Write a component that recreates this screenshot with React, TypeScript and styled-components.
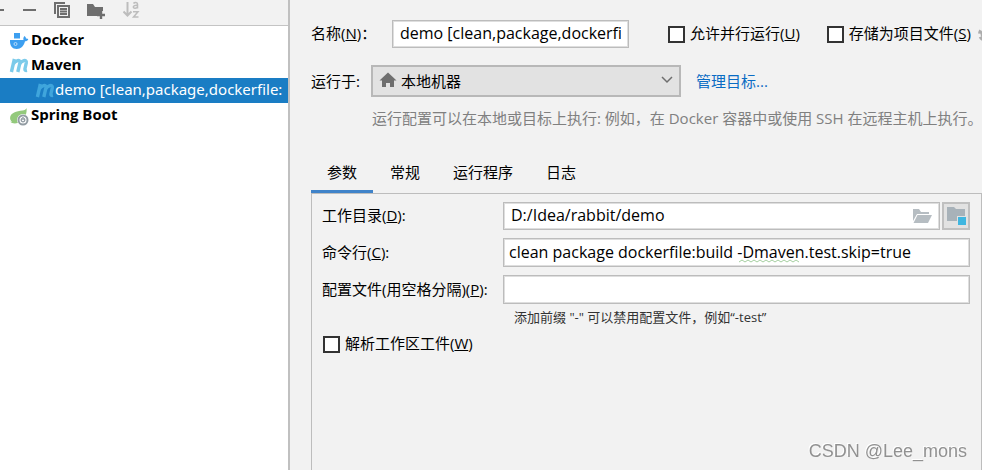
import React from "react";
import styled, { createGlobalStyle, css } from "styled-components";

const GlobalStyle = createGlobalStyle`
  *, *::before, *::after { box-sizing: border-box; }
  body {
    margin: 0;
    background: #f2f2f2;
    color: #000;
    font: 15px/20px "Open Sans", "Noto Sans CJK SC", sans-serif;
  }
  input, select, button { font: inherit; color: inherit; }
`;

const Window = styled.div`
  display: flex;
  min-height: 100vh;
  overflow: hidden;
`;

const Sidebar = styled.aside`
  flex: 0 0 290px;
  overflow: hidden;
  background: #fff;
  border-right: 2px solid #c0c0c0;
`;

const Toolbar = styled.div`
  display: flex;
  align-items: flex-start;
  gap: 16px;
  height: 26px;
  background: #f2f2f2;
  border-bottom: 1px solid #c4c4c4;
`;

const ToolButton = styled.button<{ $clipped?: boolean }>`
  display: flex;
  flex: none;
  padding: 0;
  border: 0;
  background: none;
  margin-left: ${(p) => (p.$clipped ? "-11px" : "0")};
`;

const Tree = styled.ul`
  margin: 0;
  padding: 2px 0 0;
  list-style: none;
`;

const TreeRow = styled.li<{ $child?: boolean }>`
  display: flex;
  align-items: center;
  height: 25px;
  padding-left: ${(p) => (p.$child ? "35px" : "9px")};
  gap: ${(p) => (p.$child ? "0" : "2px")};
  white-space: nowrap;
  font-family: ${(p) => (p.$child ? '"Noto Sans"' : '"Open Sans"')}, "Noto Sans CJK SC", sans-serif;
  font-weight: ${(p) => (p.$child ? 400 : 700)};
  background: ${(p) => (p.$child ? "#1a7dc4" : "transparent")};
  color: ${(p) => (p.$child ? "#fff" : "#000")};
  svg { flex: none; }
`;

const TreeText = styled.span`
  padding-bottom: 3px;
`;

const Main = styled.main`
  flex: 1;
  min-width: 0;
  display: flex;
  flex-direction: column;
  padding: 20px 0 0 21px;
  overflow: hidden;
`;

const NameRow = styled.div`
  display: flex;
  align-items: center;
  height: 28px;
  white-space: nowrap;
`;

const NameLabel = styled.label`
  flex: 0 0 81px;
  padding-bottom: 2px;
`;

const fieldBox = css`
  min-width: 0;
  border: 1px solid #bcbcbc;
  border-radius: 0;
  background: #fff;
  box-shadow: inset 0 0 0 1px #dedede;
  outline: 0;
`;

const NameInput = styled.input`
  ${fieldBox}
  flex: 1;
  min-width: 237px;
  height: 28px;
  padding: 0 7px 2px;
  font-size: 16px;
`;

const CheckLabel = styled.label`
  display: flex;
  align-items: center;
  gap: 5px;
  white-space: nowrap;
`;

const CheckText = styled.span`
  padding-bottom: 2px;
`;

const CheckBox = styled.input.attrs({ type: "checkbox" })`
  appearance: none;
  flex: none;
  width: 17px;
  height: 17px;
  margin: 0;
  border: 2px solid #333;
  background: #fff;
  &:checked { box-shadow: inset 0 0 0 3px #fff; background: #333; }
`;

const NameOptions = styled.div`
  display: flex;
  align-items: center;
  flex: none;
  gap: 27px;
  margin-left: 39px;
`;

const GearButton = styled.button`
  display: flex;
  flex: none;
  padding: 0;
  border: 0;
  margin-left: 7px;
  background: none;
`;

const TargetRow = styled.div`
  display: flex;
  align-items: center;
  margin-top: 17px;
`;

const TargetLabel = styled.label`
  flex: 0 0 60px;
  white-space: nowrap;
`;

const SelectWrap = styled.div`
  position: relative;
  flex: 0 1 310px;
  color: #6e6e6e;
`;

const TargetSelect = styled.select`
  appearance: none;
  width: 100%;
  height: 32px;
  padding: 0 28px;
  border: 2px solid #b8b8b8;
  border-radius: 0;
  background: #e2e2e2;
  color: #000;
`;

const Overlay = styled.span<{ $side: "left" | "right" }>`
  position: absolute;
  top: 0;
  bottom: 2px;
  ${(p) => p.$side}: 8px;
  display: flex;
  align-items: center;
  pointer-events: none;
`;

const Link = styled.a`
  margin-left: 15px;
  color: #0a6cc4;
  text-decoration: none;
  white-space: nowrap;
`;

const TargetHint = styled.p`
  margin: 11px 0 0 61px;
  color: #808080;
  white-space: nowrap;
`;

const Tabs = styled.div`
  display: flex;
  gap: 1px;
  height: 46px;
  margin-top: 20px;
`;

const Tab = styled.button<{ $active?: boolean }>`
  padding: 5px 16px 0;
  border: 0;
  border-bottom: 4px solid ${(p) => (p.$active ? "#4083c9" : "transparent")};
  background: none;
  white-space: nowrap;
`;

const Panel = styled.section`
  flex: 1;
  margin-top: -1px;
  padding: 8px 11px 0 10px;
  border: solid #bdbdbd;
  border-width: 1px 1px 0;
`;

const FieldGrid = styled.div`
  display: grid;
  grid-template-columns: 181px minmax(0, 1fr);
  align-items: center;
  row-gap: 8px;
`;

const FieldLabel = styled.label`
  padding-bottom: 2px;
  white-space: nowrap;
`;

const Field = styled.div`
  position: relative;
  display: flex;
  gap: 2px;
`;

const TextInput = styled.input<{ $inset?: boolean }>`
  ${fieldBox}
  flex: 1;
  height: ${(p) => (p.$inset ? "28px" : "29px")};
  padding: ${(p) => (p.$inset ? "0 31px 3px 7px" : "0 5px 2px")};
  font-size: 16px;
`;

const BrowseButton = styled.button`
  position: absolute;
  top: 7px;
  right: 38px;
  display: flex;
  padding: 0;
  border: 0;
  background: none;
`;

const ModuleButton = styled.button`
  display: flex;
  align-items: center;
  justify-content: center;
  width: 28px;
  height: 28px;
  padding: 0;
  border: 2px solid #c0c0c0;
  background: #e2e2e2;
`;

const Squiggle = styled.svg`
  position: absolute;
  left: 236px;
  top: 21px;
  pointer-events: none;
`;

const FieldHint = styled.p`
  margin: 3px 0 0 192px;
  font-size: 13px;
  color: #333;
`;

const PanelCheck = styled.div`
  display: flex;
  margin: 6px 0 0 1px;
`;

const Watermark = styled.div`
  position: fixed;
  right: 15px;
  bottom: 8px;
  font: 18px/22px "Liberation Sans", Arial, sans-serif;
  color: #919191;
  text-shadow: -1px -1px 0 #fff;
`;

const MavenIcon = ({ color }: { color: string }) => (
  <svg width="20" height="20" viewBox="0 0 20 20" fill="none" stroke={color} strokeWidth="3.4">
    <path d="M5.400 3 2.400 16" />
    <path d="M4.300 8C6.200 4.600 11.600 2.800 10.900 6.800L8.800 16" />
    <path d="M10.500 8C12.400 4.600 18 2.800 17.300 6.800L15.900 13C15.700 14.400 16.500 14.700 18 14.400" />
  </svg>
);

const DockerIcon = () => (
  <svg width="20" height="20" viewBox="0 0 20 20">
    <path fill="#3d9ff0" d="M5 2h6v5.500H5zM1 9h13.500c-.5-1.700.1-3 1.100-4 1 .9 1.400 1.700 1.400 2.700 1-.2 1.800 0 2.300.5-.6 1.400-1.800 2.100-3.300 2.100C14.800 15.200 12 18 7.700 18 3.400 18 .7 15.300 1 9z" />
    <circle cx="6.500" cy="13" r="1.500" fill="none" stroke="#b8dcfa" />
  </svg>
);

const SpringIcon = () => (
  <svg width="20" height="20" viewBox="0 0 20 20">
    <path fill="#93c97c" d="M17.500 2c-.6 1.700-1.800 2.300-4 2.500-6 .6-12 2.200-12.400 7.300-.1 1.700.6 3 2 4C1.900 16 1 15.500 1 15.500c2 2.500 7.200 2.500 10.200.3C15.800 13 18.300 7.500 17.500 2z" />
    <g transform="translate(14 14)">
      <circle r="6" fill="#fff" />
      <circle r="4.500" fill="none" stroke="#929ca3" strokeWidth="2" />
      <circle r="1.800" fill="none" stroke="#929ca3" strokeWidth="1.300" />
      <path stroke="#fff" strokeWidth="1" d="M0-3.500v3" />
      <path stroke="#929ca3" strokeWidth="1.400" d="M0-3v3" />
    </g>
  </svg>
);

const CopyIcon = () => (
  <svg width="18" height="20" viewBox="0 0 18 20" fill="none" stroke="#6e6e6e" strokeWidth="2">
    <path d="M2 14V3h10" />
    <path d="M5 6h11v11H5zM7 9h7M7 11.500h7M7 14h7" />
  </svg>
);

const FolderAddIcon = () => (
  <svg width="20" height="20" viewBox="0 0 20 20">
    <path fill="#6e6e6e" d="M0 4h6l2 3h8v4h-3v3h-3v2H0z" />
    <path stroke="#6e6e6e" strokeWidth="2.400" d="M14 11v8M10 15h8" />
  </svg>
);

const SortIcon = () => (
  <svg width="18" height="20" viewBox="0 0 18 20" fill="none" stroke="#bdbdbd">
    <path strokeWidth="2" d="M4.500 2v13M.500 11.500l4 4 4-4" />
    <path strokeWidth="1.500" d="M10.500 3.500C11.500 2 14.500 2 14.500 4V8.500M14.500 5.200c-5-.4-5 3-2.500 3 1.500 0 2.500-1 2.500-2M10 11.700h5L10.500 17H15.500" />
  </svg>
);

const HomeIcon = () => (
  <svg width="18" height="18" viewBox="0 0 18 18">
    <path fill="#6e6e6e" d="M9 1.500 17.500 9.500H15V16h-4v-4H7v4H3V9.500H.500z" />
  </svg>
);

const ModuleIcon = () => (
  <svg width="20" height="20" viewBox="0 0 20 20">
    <path fill="#a8b2b9" d="M1 1h7l2 2h9v7h-8v5H1z" />
    <path fill="#40b6e0" d="M12 11h8v8h-8z" />
  </svg>
);

const OpenFolderIcon = () => (
  <svg width="20" height="15" viewBox="0 0 20 15" fill="#b6bdc2">
    <path d="M1 0h6l2 3h8v2H5L1 12z" />
    <path d="M5.500 6H20L16 14H1.500z" />
  </svg>
);

export default function App() {
  return (
    <>
      <GlobalStyle />
      <Window>
        <Sidebar>
          <Toolbar>
            <ToolButton $clipped aria-label="添加">
              <svg width="16" height="20"><path d="M2 10h13" stroke="#6e6e6e" strokeWidth="2" /></svg>
            </ToolButton>
            <ToolButton aria-label="移除">
              <svg width="16" height="20"><path d="M2 10h13" stroke="#6e6e6e" strokeWidth="2" /></svg>
            </ToolButton>
            <ToolButton aria-label="复制"><CopyIcon /></ToolButton>
            <ToolButton aria-label="新建文件夹"><FolderAddIcon /></ToolButton>
            <ToolButton aria-label="排序"><SortIcon /></ToolButton>
          </Toolbar>
          <Tree>
            <TreeRow><DockerIcon /><TreeText>Docker</TreeText></TreeRow>
            <TreeRow><MavenIcon color="#7ccbea" /><TreeText>Maven</TreeText></TreeRow>
            <TreeRow $child><MavenIcon color="#3fa5dc" /><TreeText>demo [clean,package,dockerfile:</TreeText></TreeRow>
            <TreeRow><SpringIcon /><TreeText>Spring Boot</TreeText></TreeRow>
          </Tree>
        </Sidebar>

        <Main>
          <NameRow>
            <NameLabel htmlFor="name">名称(<u>N</u>)：</NameLabel>
            <NameInput id="name" defaultValue="demo [clean,package,dockerfile:build]" />
            <NameOptions>
              <CheckLabel><CheckBox /><CheckText>允许并行运行(<u>U</u>)</CheckText></CheckLabel>
              <CheckLabel><CheckBox /><CheckText>存储为项目文件(<u>S</u>)</CheckText></CheckLabel>
            </NameOptions>
            <GearButton aria-label="设置">
              <svg width="16" height="16" viewBox="0 0 16 16" fill="none" stroke="#adadad">
                <circle cx="8" cy="8" r="4" strokeWidth="3" />
                <circle cx="8" cy="8" r="6.500" strokeWidth="3" strokeDasharray="3.400 3.400" />
              </svg>
            </GearButton>
          </NameRow>

          <TargetRow>
            <TargetLabel htmlFor="target">运行于:</TargetLabel>
            <SelectWrap>
              <TargetSelect id="target"><option>本地机器</option></TargetSelect>
              <Overlay $side="left"><HomeIcon /></Overlay>
              <Overlay $side="right">
                <svg width="12" height="12" viewBox="0 0 12 12" fill="none" stroke="#6e6e6e" strokeWidth="1.500">
                  <path d="M1 3l5 5 5-5" />
                </svg>
              </Overlay>
            </SelectWrap>
            <Link href="#targets">管理目标...</Link>
          </TargetRow>
          <TargetHint>运行配置可以在本地或目标上执行: 例如，在 Docker 容器中或使用 SSH 在远程主机上执行。</TargetHint>

          <Tabs role="tablist">
            <Tab role="tab" aria-selected $active>参数</Tab>
            <Tab role="tab">常规</Tab>
            <Tab role="tab">运行程序</Tab>
            <Tab role="tab">日志</Tab>
          </Tabs>

          <Panel>
            <FieldGrid>
              <FieldLabel htmlFor="dir">工作目录(<u>D</u>):</FieldLabel>
              <Field>
                <TextInput id="dir" $inset defaultValue="D:/Idea/rabbit/demo" />
                <BrowseButton aria-label="浏览"><OpenFolderIcon /></BrowseButton>
                <ModuleButton aria-label="选择模块"><ModuleIcon /></ModuleButton>
              </Field>
              <FieldLabel htmlFor="cmd">命令行(<u>C</u>):</FieldLabel>
              <Field>
                <TextInput id="cmd" spellCheck={false} defaultValue="clean package dockerfile:build -Dmaven.test.skip=true" />
                <Squiggle width="60" height="4" viewBox="0 0 60 4" fill="none" stroke="#a5cfa0">
                  <path d="M0 3l3-2 3 2 3-2 3 2 3-2 3 2 3-2 3 2 3-2 3 2 3-2 3 2 3-2 3 2 3-2 3 2 3-2 3 2 3-2 3 2" />
                </Squiggle>
              </Field>
              <FieldLabel htmlFor="profiles">配置文件(用空格分隔)(<u>P</u>):</FieldLabel>
              <Field><TextInput id="profiles" /></Field>
            </FieldGrid>
            <FieldHint>添加前缀 "-" 可以禁用配置文件，例如“-test”</FieldHint>
            <PanelCheck>
              <CheckLabel><CheckBox /><CheckText>解析工作区工件(<u>W</u>)</CheckText></CheckLabel>
            </PanelCheck>
          </Panel>
        </Main>
      </Window>
      <Watermark>CSDN @Lee_mons</Watermark>
    </>
  );
}
